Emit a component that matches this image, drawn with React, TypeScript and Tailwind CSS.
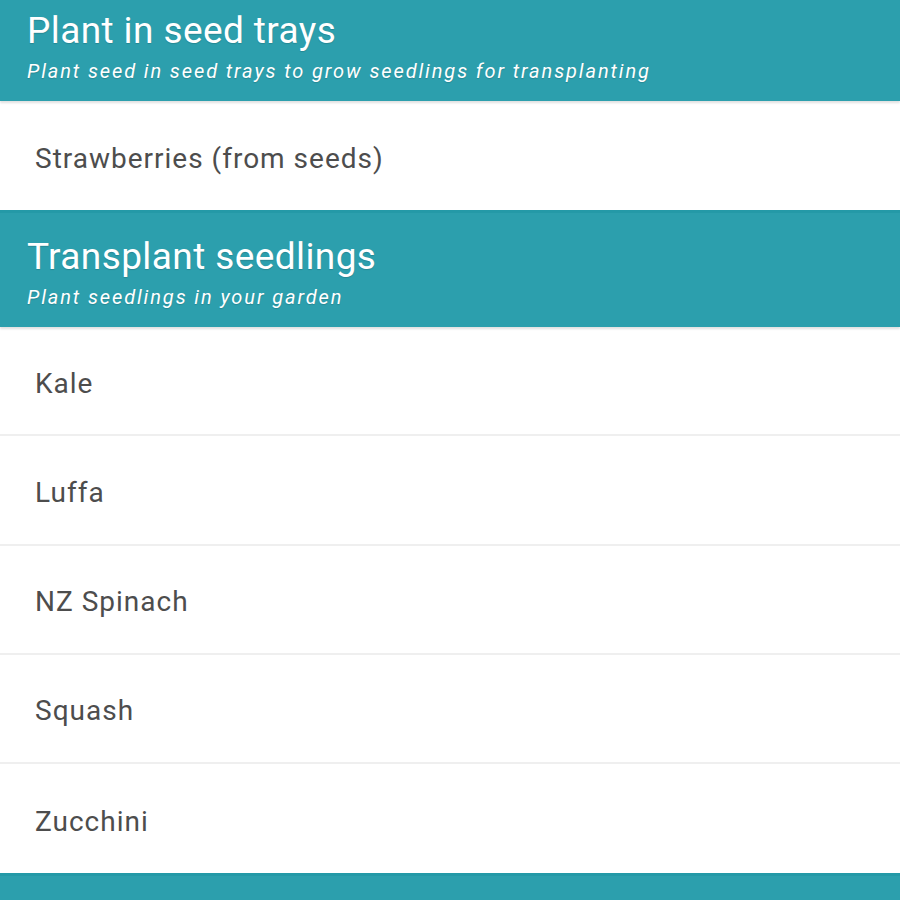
const sections = [
  {
    title: 'Plant in seed trays',
    subtitle: 'Plant seed in seed trays to grow seedlings for transplanting',
    items: ['Strawberries (from seeds)'],
  },
  {
    title: 'Transplant seedlings',
    subtitle: 'Plant seedlings in your garden',
    items: ['Kale', 'Luffa', 'NZ Spinach', 'Squash', 'Zucchini'],
  },
  {
    title: 'Plant in garden',
    subtitle: 'Sow seed directly in your garden',
    items: ['Beans', 'Carrots'],
  },
];

function SectionHeader({ title, subtitle }: { title: string; subtitle: string }) {
  return (
    <div className="h-[117px] bg-[#2c9fad] border-t-[3px] border-[#2499a7] px-[27px] pt-[23px] text-white shadow-[0_2px_2px_rgba(0,0,0,0.12)] relative z-10">
      <div className="text-[37px] leading-[42px] tracking-[0.4px] [text-shadow:0_1px_1px_rgba(0,0,0,0.15)]">{title}</div>
      <div className="text-[20px] leading-[26px] italic tracking-[1.9px] mt-[6px] [text-shadow:0_1px_1px_rgba(0,0,0,0.15)]">{subtitle}</div>
    </div>
  );
}

export default function App() {
  return (
    <main className="w-[900px] h-[900px] overflow-hidden bg-white font-['Roboto',sans-serif]">
      <div className="-mt-[16px]">
        {sections.map((s) => (
          <section key={s.title}>
            <SectionHeader title={s.title} subtitle={s.subtitle} />
            <ul>
              {s.items.map((item, i) => (
                <li
                  key={item}
                  className={
                    'h-[109.2px] flex items-center pl-[35px] pt-[6px] text-[28px] tracking-[1px] text-[#4d4d4d] ' +
                    (i < s.items.length - 1 ? 'border-b-2 border-[#efefef]' : '')
                  }
                >
                  {item}
                </li>
              ))}
            </ul>
          </section>
        ))}
      </div>
    </main>
  );
}
